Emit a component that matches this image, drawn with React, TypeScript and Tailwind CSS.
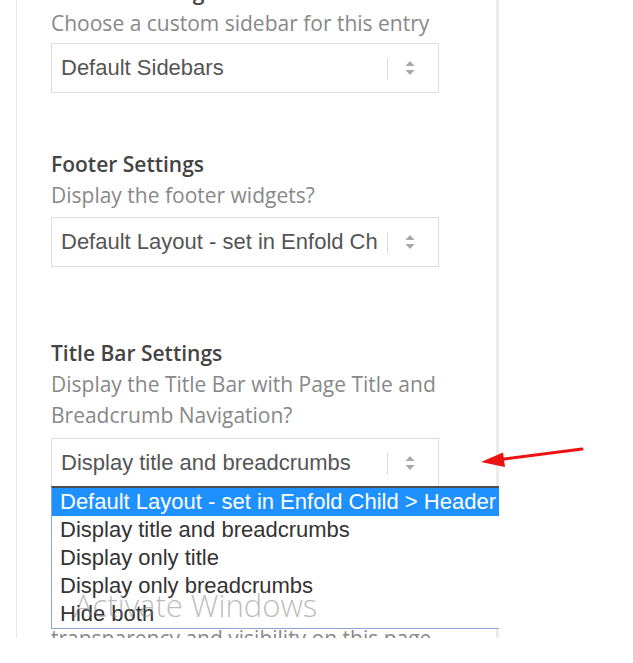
import React from "react";

const sans = { fontFamily: '"Open Sans", "Noto Sans", sans-serif' };
const arial = { fontFamily: '"Liberation Sans", Arial, sans-serif' };

function Arrows() {
  return (
    <svg width="10" height="14" viewBox="0 0 10 14" className="ml-[17px]">
      <polygon points="5,0 9.5,5 0.5,5" fill="#a8a8a8" />
      <polygon points="0.5,9 9.5,9 5,14" fill="#a8a8a8" />
    </svg>
  );
}

function Select({ text, className = "" }: { text: string; className?: string }) {
  return (
    <div
      className={`flex items-center w-[388px] h-[50px] border border-[#dedede] bg-white pl-[9px] ${className}`}
    >
      <span
        className="w-[318px] overflow-hidden whitespace-nowrap text-[22px] leading-[26px] text-[#555]"
        style={arial}
      >
        {text}
      </span>
      <div className="ml-[8px] w-px h-[21px] bg-[#dadada]" />
      <Arrows />
    </div>
  );
}

function Heading({ children, className = "" }: { children: React.ReactNode; className?: string }) {
  return (
    <div className={`text-[21px] leading-[31px] font-semibold text-[#444] ${className}`} style={sans}>
      {children}
    </div>
  );
}

function Desc({ children, className = "" }: { children: React.ReactNode; className?: string }) {
  return (
    <div className={`text-[21px] leading-[31px] text-[#888] ${className}`} style={sans}>
      {children}
    </div>
  );
}

const options = [
  "Default Layout - set in Enfold Child > Header",
  "Display title and breadcrumbs",
  "Display only title",
  "Display only breadcrumbs",
  "Hide both",
];

export default function App() {
  return (
    <div className="relative w-[633px] h-[663px] bg-white overflow-hidden">
      <div className="relative ml-4 w-[483px] h-[638px] overflow-hidden">
        <div className="flex flex-col h-full border-l border-l-[#e6e6e6] border-r-[3px] border-r-[#ebebeb] pl-[34px]">
          <div className="-mt-[23px] flex flex-col items-start">
            <Heading>Sidebar Settings</Heading>
            <Desc>Choose a custom sidebar for this entry</Desc>
            <Select text="Default Sidebars" className="mt-[4px]" />

            <Heading className="mt-[56px]">Footer Settings</Heading>
            <Desc>Display the footer widgets?</Desc>
            <Select text="Default Layout - set in Enfold Child > Footer" className="mt-[6px]" />

            <Heading className="mt-[71px]">Title Bar Settings</Heading>
            <Desc className="w-[420px]">
              Display the Title Bar with Page Title and Breadcrumb Navigation?
            </Desc>
            <div className="relative mt-[7px]">
              <Select text="Display title and breadcrumbs" />
              <div className="absolute left-0 top-[48px] w-[470px] bg-white border-t-2 border-t-[#4d4d4d] border-l border-l-[#8da6cf] border-b border-b-[#8da6cf] z-10">
                {options.map((o, i) => (
                  <div
                    key={o}
                    className={`h-[28px] pl-[8px] whitespace-nowrap text-[22px] leading-[28px] ${
                      i === 0 ? "bg-[#1e90ff] text-white" : "text-[#333]"
                    }`}
                    style={arial}
                  >
                    {o}
                  </div>
                ))}
              </div>
            </div>

            <Heading className="mt-[73px]">Header visibility and transparency</Heading>
            <Desc>Several options to change the header</Desc>
            <Desc>transparency and visibility on this page</Desc>
          </div>
        </div>
        <div
          className="absolute left-[58px] top-[585px] z-20 pointer-events-none whitespace-nowrap text-[31px] leading-[40px] font-light text-[#7a7a7a]/50"
          style={sans}
        >
          Activate Windows
        </div>
      </div>
      <svg
        className="absolute left-[470px] top-[440px]"
        width="120"
        height="35"
        viewBox="470 440 120 35"
      >
        <line x1="582" y1="449" x2="500" y2="459.5" stroke="#ee1111" strokeWidth="3" strokeLinecap="round" />
        <polygon points="481,462 503,452.5 505,467" fill="#ee1111" />
      </svg>
    </div>
  );
}
